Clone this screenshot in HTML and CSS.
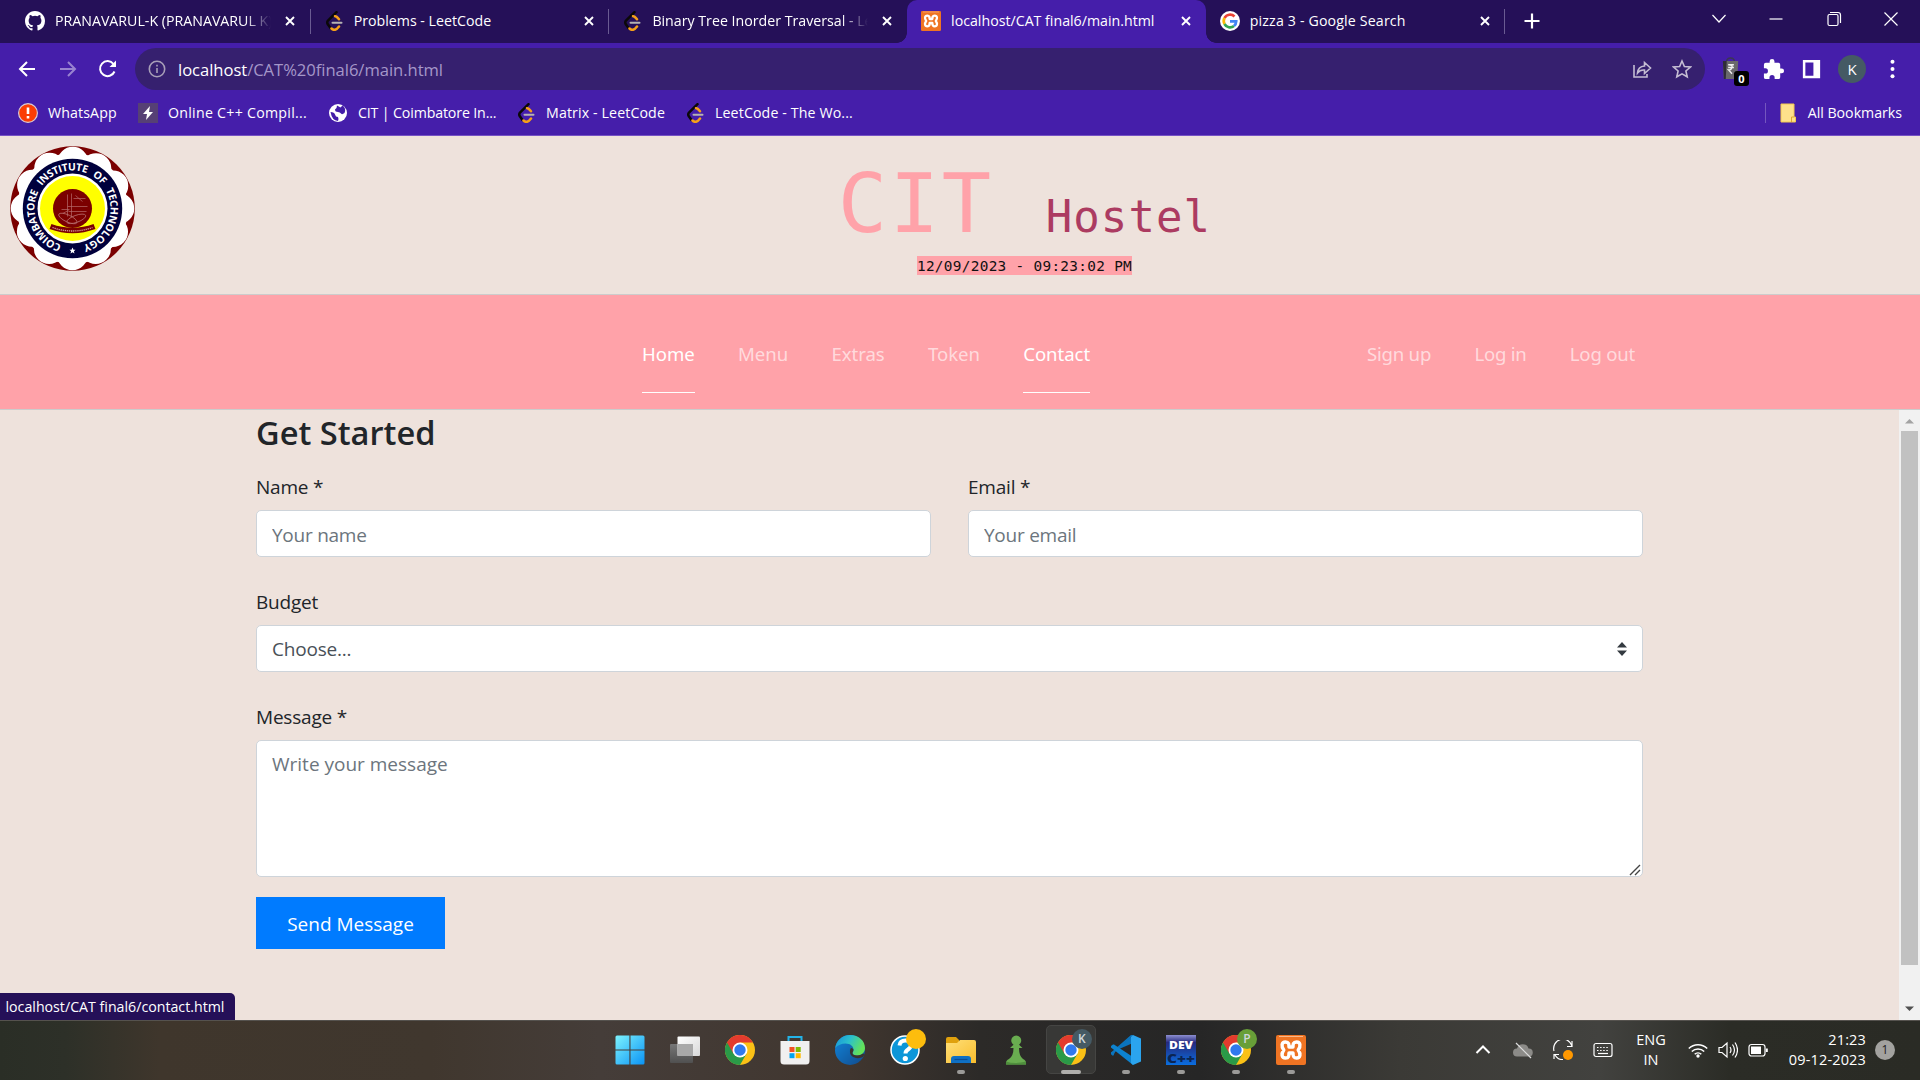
FILE: index.html
```html
<!DOCTYPE html>
<html lang="en">
<head>
<meta charset="utf-8">
<title>CIT Hostel</title>
<link rel="stylesheet" href="styles.css">
</head>
<body>
<svg class="defs" width="0" height="0" aria-hidden="true">
  <defs>
    <linearGradient id="win" x1="0" y1="0" x2="1" y2="1"><stop offset="0" stop-color="#7df3fd"/><stop offset="1" stop-color="#0a93f5"/></linearGradient>
    <linearGradient id="sheet" x1="0" y1="0" x2="1" y2="1"><stop offset="0" stop-color="#fff"/><stop offset="1" stop-color="#d8d8d8"/></linearGradient>
    <linearGradient id="sheetdark" x1="0" y1="0" x2="0" y2="1"><stop offset="0" stop-color="#777"/><stop offset="1" stop-color="#505050"/></linearGradient>
    <linearGradient id="edgeTop" x1="0" y1="0" x2="1" y2="0.4"><stop offset="0" stop-color="#1690dc"/><stop offset=".5" stop-color="#2bc0cc"/><stop offset="1" stop-color="#63e25a"/></linearGradient>
    <linearGradient id="edgeLow" x1="0" y1="0" x2="1" y2="1"><stop offset="0" stop-color="#1186dc"/><stop offset="1" stop-color="#114a8b"/></linearGradient>
    <linearGradient id="fold" x1="0" y1="0" x2="1" y2="1"><stop offset="0" stop-color="#ffdf78"/><stop offset="1" stop-color="#f9bd2d"/></linearGradient>
    <linearGradient id="dev" x1="0" y1="0" x2="0" y2="1"><stop offset="0" stop-color="#8d8fd0"/><stop offset=".25" stop-color="#262a80"/><stop offset=".5" stop-color="#1c3f9c"/><stop offset="1" stop-color="#0a6ee0"/></linearGradient>
    <symbol id="leet" viewBox="-2 0 20 20">
      <path d="M10.500 1.200 2 9.500q-1.500 1.800 0 4L4.500 17" fill="none" stroke="#0b0808" stroke-width="2.500" stroke-linecap="round"/>
      <path d="M9 5.200q1.500-.2 4 3M5.500 17.500q3.500 3.500 7.500-2" fill="none" stroke="#f6a019" stroke-width="2.500" stroke-linecap="round"/>
      <path d="M6.500 11.700h9" stroke="#b6b3b3" stroke-width="2" stroke-linecap="round"/>
    </symbol>
    <symbol id="close" viewBox="0 0 12 12"><path d="m2 2 8 8m0-8-8 8" stroke="#fff" stroke-width="1.900"/></symbol>
    <symbol id="chrome" viewBox="0 0 30 30">
      <circle cx="15" cy="15" r="15" fill="#fbc116"/>
      <path d="M15 15 2 7.500A15 15 0 0 0 15 30l6.500-11.200Z" fill="#2a9a48"/>
      <path d="M2 7.500A15 15 0 0 1 28 7.500H15L8.500 18.800Z" fill="#e33b2e"/>
      <circle cx="15" cy="15" r="7.500" fill="#fff"/><circle cx="15" cy="15" r="5.700" fill="#3079ee"/>
    </symbol>
    <symbol id="xampp" viewBox="0 0 30 30">
      <rect width="30" height="30" rx="2" fill="#ef7423"/><path d="M3 1.500h24" stroke="#f9b788" stroke-width="1"/>
      <path d="M9.500 7C5.500 7 5 11 7.800 15 5 19 5.500 23 9.500 23c3.500 0 3.500-2.500 3.500-5h4c0 2.500 0 5 3.500 5 4 0 4.500-4 1.700-8 2.800-4 2.300-8-1.700-8-3.500 0-3.500 2.500-3.500 5h-4c0-2.500 0-5-3.500-5Z" fill="none" stroke="#fff" stroke-width="3.400" stroke-linejoin="round"/>
    </symbol>
  </defs>
</svg>

<header class="tabs">
  <div class="tab">
    <svg class="fav" viewBox="0 0 16 16"><path fill="#fff" d="M8 0C3.580 0 0 3.580 0 8c0 3.540 2.290 6.530 5.470 7.590.4.070.55-.17.55-.38 0-.19-.01-.82-.01-1.490-2.010.37-2.530-.49-2.690-.94-.09-.23-.48-.94-.82-1.130-.28-.15-.68-.52-.01-.53.63-.01 1.080.58 1.230.82.72 1.210 1.870.87 2.330.66.070-.52.28-.87.51-1.070-1.780-.2-3.640-.89-3.640-3.950 0-.87.31-1.590.82-2.150-.08-.2-.36-1.020.08-2.120 0 0 .67-.21 2.200.82a7.600 7.600 0 0 1 4 0c1.530-1.040 2.200-.82 2.200-.82.44 1.100.16 1.920.08 2.120.51.56.82 1.270.82 2.150 0 3.070-1.870 3.750-3.650 3.950.29.25.54.73.54 1.480 0 1.070-.01 1.930-.01 2.200 0 .21.15.46.55.38A8 8 0 0 0 16 8c0-4.420-3.580-8-8-8Z"/></svg>
    <span class="name fade">PRANAVARUL-K (PRANAVARUL K)</span><svg class="x"><use href="#close"/></svg>
  </div>
  <div class="tab line"><svg class="fav"><use href="#leet"/></svg><span class="name">Problems - LeetCode</span><svg class="x"><use href="#close"/></svg></div>
  <div class="tab line"><svg class="fav"><use href="#leet"/></svg><span class="name fade">Binary Tree Inorder Traversal - LeetCode</span><svg class="x"><use href="#close"/></svg></div>
  <div class="tab active"><svg class="fav"><use href="#xampp"/></svg><span class="name">localhost/CAT final6/main.html</span><svg class="x"><use href="#close"/></svg></div>
  <div class="tab">
    <svg class="fav" viewBox="0 0 20 20"><circle cx="10" cy="10" r="10" fill="#fff"/><g fill="none" stroke-width="2.700"><path d="M14.500 5.500A6.300 6.300 0 0 0 4.500 7" stroke="#ea4335"/><path d="M4.500 7a6.300 6.300 0 0 0 0 6" stroke="#fbbc05"/><path d="M4.500 13a6.300 6.300 0 0 0 9.500 2" stroke="#34a853"/><path d="M14 15a6.300 6.300 0 0 0 2.200-4.600H10" stroke="#4285f4"/></g></svg>
    <span class="name wide">pizza 3 - Google Search</span><svg class="x"><use href="#close"/></svg>
  </div>
  <div class="newtab"><svg width="18" height="18" viewBox="0 0 18 18"><path d="M9 1.500v15M1.500 9h15" stroke="#fff" stroke-width="2.200"/></svg></div>
  <div class="winctl">
    <svg viewBox="0 0 20 20"><path d="m3.500 6 6.500 7 6.500-7"/></svg>
    <svg viewBox="0 0 20 20"><path d="M3.500 10h13"/></svg>
    <svg viewBox="0 0 20 20"><rect x="4" y="5.500" width="10" height="11" rx="1.500"/><path d="M6 3.500h8q2.500 0 2.500 2.500v8"/></svg>
    <svg viewBox="0 0 20 20"><path d="m3.500 3.500 13 13m0-13-13 13"/></svg>
  </div>
</header>

<div class="toolbar">
  <div class="navbtns">
    <svg viewBox="0 0 20 20"><path d="M18 10H3m7-7-7 7 7 7"/></svg>
    <svg class="dim" viewBox="0 0 20 20"><path d="M2 10h15m-7-7 7 7-7 7"/></svg>
    <svg viewBox="0 0 20 20"><path d="M16.500 12.500A7.500 7.500 0 1 1 15.500 5"/><path d="M18 1.500V8h-6.500Z" fill="#fff" stroke="none"/></svg>
  </div>
  <div class="omnibox">
    <svg class="info" viewBox="0 0 18 18"><circle cx="9" cy="9" r="7.700"/><path d="M9 8v5M9 4.800v1.600"/></svg>
    <span class="url"><b>localhost</b>/CAT%20final6/main.html</span>
    <svg class="act" viewBox="0 0 20 20"><path d="M2 6v12h13v-3"/><path d="M5.500 14q.5-6.500 7-7V3.500l6 5.500-6 5.500V11q-4.500-.5-7 3Z"/></svg>
    <svg class="act" viewBox="0 0 20 20"><path d="m10 2 2.400 5.500 6 .5-4.500 4 1.300 5.800L10 14.800l-5.200 3L6.100 12 1.600 8l6-.5Z"/></svg>
  </div>
  <div class="exts">
    <div class="bag"><svg viewBox="0 0 24 26"><path d="M7 5q0-4 4-4t4 4" fill="none" stroke="#3c3753" stroke-width="1.500"/><path d="M3 4h16l-1 19H4Z" fill="#6a696c"/><path d="M3 4h4l-1 19H4Z" fill="#2f2c38"/><path d="M8.500 8h6M8.500 11h6M9 8q4.500 0 3.500 3t-3.500 2.500l3.500 4" fill="none" stroke="#eee" stroke-width="1.500"/></svg><span class="count">0</span></div>
    <svg viewBox="0 0 24 24"><path fill="#fff" d="M20.500 11H19V7a2 2 0 0 0-2-2h-4V3.500a2.500 2.500 0 0 0-5 0V5H4a2 2 0 0 0-2 2v3.800h1.500a2.700 2.700 0 0 1 0 5.400H2V20a2 2 0 0 0 2 2h3.800v-1.500a2.700 2.700 0 0 1 5.400 0V22H17a2 2 0 0 0 2-2v-4h1.500a2.500 2.500 0 0 0 0-5Z"/></svg>
    <svg viewBox="0 0 24 24"><path fill="#fff" d="M3 2h18v19H3Zm2.600 2.600v13.800h8.400V4.600Z"/></svg>
    <div class="profile">K</div>
    <svg viewBox="0 0 24 24"><g fill="#fff"><circle cx="12" cy="4" r="2.100"/><circle cx="12" cy="11.500" r="2.100"/><circle cx="12" cy="19" r="2.100"/></g></svg>
  </div>
</div>

<nav class="bookmarks">
  <a class="bm b1"><svg viewBox="0 0 20 20"><circle cx="10" cy="10" r="9.400" fill="#fb3d04" stroke="#d8ccd8" stroke-width="1.200"/><path d="M10 4.500v6.500M10 13v2.600" stroke="#fff" stroke-width="2.600"/></svg>WhatsApp</a>
  <a class="bm b2"><svg viewBox="0 0 20 20"><path fill="#564075" d="M0 0h20v20H0z"/><path fill="#fff" d="M12 3 5 11h4l-1 6 7-8h-4Z"/></svg>Online C++ Compil...</a>
  <a class="bm b3"><svg viewBox="0 0 20 20"><circle cx="10" cy="10" r="9" fill="#fff"/><path d="M2.500 9q4 0 4.500 2.500t3 2.500q1 2 0 4-6-.5-7.500-9ZM9 2.500q0 3-2 4 0 2.500 3 2.500 2 0 3 1.500t3.500-.5q2-5-2-7.500l-2 2Z" fill="#431ca8"/></svg>CIT | Coimbatore In...</a>
  <a class="bm b4"><svg><use href="#leet"/></svg>Matrix - LeetCode</a>
  <a class="bm b5"><svg><use href="#leet"/></svg>LeetCode - The Wo...</a>
  <a class="bm all"><svg viewBox="0 0 20 20"><path fill="#fee08b" stroke="#f3c84e" d="M3 1h13v13h1.500v5H3Z"/><path d="M13.500 19v-5H16" fill="none" stroke="#dda92e"/></svg>All Bookmarks</a>
</nav>

<section class="masthead">
  <svg class="seal" viewBox="-62.5 -62.5 125 125">
    <circle r="62.300" fill="#7b0000"/>
    <circle r="55.500" fill="#fff"/>
    <circle r="46.500" fill="none" stroke="#fff" stroke-width="30.500" stroke-dasharray="0 24.347" stroke-linecap="round"/>
    <circle r="49.700" fill="#00003c"/><circle r="35" fill="#fff"/><circle r="32.500" fill="#ff0"/>
    <circle r="19.500" fill="#7b0000"/>
    <path d="M-5-14V8m4-23V9M1-10h12M3-13l7 6M-5-2h20M-4 3h18M-11 1h8M-10 5l6-3" stroke="#b66a6a" stroke-width=".7" fill="none"/>
    <ellipse cy="11" rx="10" ry="3.500" fill="none" stroke="#b66a6a" stroke-width=".8" transform="rotate(25)"/>
    <ellipse cy="11" rx="10" ry="3.500" fill="none" stroke="#b66a6a" stroke-width=".8" transform="rotate(-20)"/>
    <path d="M-22 18Q0 26 22 18" fill="none" stroke="#7b0000" stroke-width="5.500"/><path d="M-20 19Q0 26 20 19" fill="none" stroke="#d59a9a" stroke-width="1.300" stroke-dasharray="1.300 .8"/>
    <path id="ring" d="M0 38A38 38 0 0 1 0-38 38 38 0 0 1 0 38" fill="none"/>
    <text class="ringtext"><textPath href="#ring" startOffset="11" textLength="217">COIMBATORE INSTITUTE OF TECHNOLOGY</textPath></text>
    <path d="m0 39 1 2.200h2l-1.600 1.500.6 2.300-2-1.300-2 1.300.6-2.300L-3 41.200h2Z" fill="#fff"/>
  </svg>
  <div class="brand">
    <h1><span class="cit">CIT </span><span class="hostel">Hostel</span></h1>
    <span class="clock">12/09/2023 - 09:23:02 PM</span>
  </div>
</section>

<nav class="menu">
  <div class="links main"><a class="on">Home</a><a>Menu</a><a>Extras</a><a>Token</a><a class="on">Contact</a></div>
  <div class="links user"><a>Sign up</a><a>Log in</a><a>Log out</a></div>
</nav>

<main class="page">
  <form class="form">
    <h2>Get Started</h2>
    <div class="row">
      <label class="field"><span>Name *</span><input placeholder="Your name"></label>
      <label class="field"><span>Email *</span><input placeholder="Your email"></label>
    </div>
    <label class="field"><span>Budget</span><div class="select">Choose...<svg viewBox="0 0 10 14"><path d="M5 0 10 5.500H0ZM0 8.500h10L5 14Z" fill="#343a40"/></svg></div></label>
    <label class="field message"><span>Message *</span><textarea placeholder="Write your message"></textarea><svg class="grip" viewBox="0 0 12 12"><path d="M1 11 11 1M6 11l5-5" stroke="#444" stroke-width="1.400"/></svg></label>
    <button type="button">Send Message</button>
  </form>
  <div class="scroll"><svg viewBox="0 0 21 21"><path d="M6 13.500h9L10.500 9Z" fill="#a3a3a3"/></svg><div class="thumb"></div><svg viewBox="0 0 21 21"><path d="M6 7.500h9L10.500 12Z" fill="#505050"/></svg></div>
  <div class="status">localhost/CAT final6/contact.html</div>
</main>

<footer class="taskbar">
  <div class="apps">
    <div class="app"><svg viewBox="0 0 30 30"><path fill="url(#win)" d="M.5 2q0-1.500 1.500-1.500h12.400v14H.5Zm15 -1.500H28q1.500 0 1.500 1.500v12.500h-14Zm-15 15h13.900v14H2q-1.500 0-1.500-1.500Zm15 0h14V28q0 1.500-1.500 1.500H15.500Z"/></svg></div>
    <div class="app"><svg viewBox="0 0 30 30"><rect y="9" width="23" height="19" rx="1" fill="url(#sheetdark)"/><rect x="7.500" y="1.500" width="22.500" height="19.500" rx="1" fill="url(#sheet)"/><path fill="#a9a9a9" d="M7.500 9H23v12H7.500z"/></svg></div>
    <div class="app"><svg><use href="#chrome"/></svg></div>
    <div class="app"><svg viewBox="0 0 30 30"><path d="M8.500 7V2h13v5" fill="none" stroke="#23b3e8" stroke-width="2"/><path d="M.5 6h29v20q0 3.500-3.500 3.500H4Q.5 29.500.5 26Z" fill="#f0f0f0"/><path fill="#f25022" d="M9.500 12h5v5h-5z"/><path fill="#7fba00" d="M15.700 12h5v5h-5z"/><path fill="#00a4ef" d="M9.500 18.200h5v5h-5z"/><path fill="#ffb900" d="M15.700 18.200h5v5h-5z"/></svg></div>
    <div class="app"><svg viewBox="0 0 30 30"><circle cx="15" cy="15" r="15" fill="url(#edgeLow)"/><path d="M.3 13C1 6 7 0 15 0c9 0 15 6 15 13 0 5-4 7.500-8 7.500-3 0-4.500-1-4.500-2.500 0-1 1-1.500 1-3.500 0-3-3-6-8-6-4 0-8 1.500-10.200 4.500Z" fill="url(#edgeTop)"/><path d="M18.500 14.500c0 2-1 2.500-1 3.500 0 1.500 1.500 2.500 4.500 2.500 2.500 0 4.500-.7 6-2l1.500 1-1.500 2.500q-3 1.500-7 1-5-1-6-5-.3-3 .5-4.500 1.500-1.500 3 1Z" fill="#3a332e"/></svg></div>
    <div class="app help"><svg viewBox="0 0 30 30"><circle cx="15" cy="15" r="14" fill="#0d96d8" stroke="#fff" stroke-width="1.500"/><path d="M9.500 10.500q.5-5 6-5 5.500 0 5.500 4.500 0 2.500-3 4.500-2.500 1.500-2.500 4" fill="none" stroke="#fff" stroke-width="4"/><circle cx="15.300" cy="23.500" r="2.600" fill="#fff"/></svg><span class="badge gold"></span></div>
    <div class="app run"><svg viewBox="0 0 30 30"><path d="M0 4q0-2 2-2h8l3 3v5H0Z" fill="#e0a10d"/><path d="M0 8h11l3-3h14q2 0 2 2v21H0Z" fill="url(#fold)"/><path d="M5 28v-4q0-3 3-3h14q3 0 3 3v4Z" fill="#0f70c4"/><path d="M8.500 24.500h13" stroke="#0a4d96" stroke-width="1.200"/></svg></div>
    <div class="app"><svg viewBox="0 0 30 30"><path d="M5 29.500q-.5-4 3-5.500 4.500-3 4.500-11H9l3.500-3.200a5 5 0 1 1 5.500 0L21.500 13H18q0 8 4 11 3.500 1.500 3 5.500Z" fill="#69ad50"/><path d="M5 29.500v-3q9 3 20 0v3Z" fill="#4f8f3d"/></svg></div>
    <div class="app run focus"><svg><use href="#chrome"/></svg><span class="badge slate">K</span></div>
    <div class="app run"><svg viewBox="0 0 30 30"><path d="M22 0 5 14.500 2.500 20.500h-1L0 19v-1.500L22 8Z" fill="#0b74bd"/><path d="M22 0 2.500 18.500l-.5 2L0 19v-1.500L20 0Z" fill="#0b74bd"/><path d="M22 30 0 12.500V11l2-1.500h1L22 22Z" fill="#0d83d0"/><path d="m22 0 8 3.500v23L22 30l-2-2V2Z" fill="#2ba4ee"/></svg></div>
    <div class="app run"><svg viewBox="0 0 30 30"><rect width="30" height="30" fill="url(#dev)"/><text x="15" y="13.500" class="devtop" text-anchor="middle" textLength="24" lengthAdjust="spacingAndGlyphs">DEV</text><text x="15" y="27.500" class="devlow" text-anchor="middle" textLength="28" lengthAdjust="spacingAndGlyphs">C++</text></svg></div>
    <div class="app run"><svg><use href="#chrome"/></svg><span class="badge green">P</span></div>
    <div class="app run"><svg><use href="#xampp"/></svg></div>
  </div>
  <div class="tray">
    <svg viewBox="0 0 20 20"><path d="m3.500 13 6.500-6.500 6.500 6.500" stroke-width="2"/></svg>
    <svg viewBox="0 0 20 20"><path d="M4 16.500a4 4 0 0 1 0-8 6 6 0 0 1 11.500 0 4 4 0 0 1 .5 8Z" fill="#8c8b88" stroke="none"/><path d="m3 3 15 15" stroke="#ddd"/></svg>
    <svg viewBox="0 0 20 20"><path d="M1 11A9 9 0 0 1 19 6m0-5v5.500h-5M1 19v-4.500h5M2 15q3 5 8 4.500"/><circle cx="15" cy="15" r="5" fill="#ff9800" stroke="none"/></svg>
    <svg viewBox="0 0 20 20"><rect x="1" y="3.500" width="18" height="13" rx="2"/><path d="M4 7.500h12M4 10.500h12" stroke-dasharray="1.500 1.600"/><path d="M5 13.500h10"/></svg>
    <div class="lang">ENG<br>IN</div>
    <div class="sys">
      <svg viewBox="0 0 20 20"><path d="M.8 8.500a13 13 0 0 1 18.400 0M3.800 11.500a8.700 8.700 0 0 1 12.400 0M6.700 14.300a4.700 4.700 0 0 1 6.600 0" stroke-width="1.500"/><circle cx="10" cy="16" r="1.700" fill="#fff" stroke="none"/></svg>
      <svg viewBox="0 0 20 20"><path d="M1 7.500h3L9 3v14l-5-4.500H1ZM12 7q2 3 0 6M14.500 4.500q4 5.500 0 11M17 2.500q5 7.500 0 15"/></svg>
      <svg viewBox="0 0 20 20"><rect x="1" y="4.500" width="16" height="11.500" rx="2.500"/><path d="M3 6.500h10v7.500H3z" fill="#fff" stroke="none"/><path d="M18.800 8.500v3.500" stroke-width="2"/></svg>
    </div>
    <div class="time">21:23<br>09-12-2023</div>
    <div class="notif">1</div>
  </div>
</footer>
</body>
</html>
```
FILE: styles.css
```css
* { box-sizing: border-box; }
html, body { margin: 0; height: 100%; overflow: hidden; }
body {
  display: flex; flex-direction: column;
  font-family: "Open Sans", "Noto Sans", sans-serif;
  color: #212529; background: #eee2dc;
}
svg { display: block; flex: none; }
.defs { position: absolute; }

/* Browser tab strip */
.tabs { display: flex; height: 43px; flex: none; padding-left: 11px; background: #251058; color: #fff; }
.tab { display: flex; align-items: center; width: 298.700px; height: 43px; padding: 0 0 2px 14px; position: relative; }
.tab .fav { width: 20px; height: 20px; margin-right: 10px; }
.tab .name { width: 216px; font-size: 14.2px; white-space: nowrap; overflow: hidden; margin-right: 13px; }
.tab .wide { letter-spacing: .15px; }
.tab .fade { -webkit-mask-image: linear-gradient(90deg, #000 190px, transparent 216px); mask-image: linear-gradient(90deg, #000 190px, transparent 216px); }
.tab .x { width: 12px; height: 12px; }
.tab.line::before, .newtab::before { content: ""; position: absolute; left: 0; top: 9px; width: 1px; height: 25px; background: #6a5b92; }
.tab.active { background: #451eaa; border-radius: 10px 10px 0 0; }
.tab.active::before, .tab.active::after { content: ""; position: absolute; bottom: 0; width: 10px; height: 10px; }
.tab.active::before { left: -10px; background: radial-gradient(circle at 0 0, transparent 9.5px, #451eaa 10px); }
.tab.active::after { right: -10px; background: radial-gradient(circle at 100% 0, transparent 9.5px, #451eaa 10px); }
.newtab { position: relative; display: flex; align-items: center; padding: 0 0 2px 19px; }
.winctl { display: flex; gap: 37.400px; margin-left: auto; padding: 9px 19px 0 0; }
.winctl svg { width: 20px; height: 20px; fill: none; stroke: #fff; stroke-width: 1.200; }

/* Address bar */
.toolbar { display: flex; flex: none; align-items: center; height: 47px; padding: 5px 16px 0 17px; background: #451eaa; }
.navbtns { display: flex; gap: 20.500px; width: 118px; }
.navbtns svg { width: 20px; height: 20px; fill: none; stroke: #fff; stroke-width: 2; }
.navbtns .dim { opacity: .45; }
.omnibox { display: flex; align-items: center; width: 1570px; height: 42px; padding: 0 13px; border-radius: 21px; background: #36206f; }
.omnibox .info { width: 18px; height: 18px; fill: none; stroke: #a89fb8; stroke-width: 1.600; }
.url { flex: 1; margin-left: 12px; font-size: 16.6px; letter-spacing: -.04px; color: #a597c9; }
.url b { font-weight: 400; color: #fff; }
.act { width: 20px; height: 20px; margin-left: 20px; fill: none; stroke: #c5bdd3; stroke-width: 1.600; }
.exts { display: flex; align-items: center; margin-left: auto; gap: 15px; }
.exts > svg { width: 23px; height: 23px; }
.bag { position: relative; width: 27px; }
.bag svg { width: 23px; height: 25px; }
.count { position: absolute; left: 14px; top: 14px; width: 15px; height: 15px; border-radius: 3px; background: #000; color: #fff; font: 700 11px/15px "Open Sans", sans-serif; text-align: center; }
.profile { width: 28px; height: 28px; border-radius: 50%; background: #455a64; color: #fff; font-size: 15px; line-height: 28px; text-align: center; }

/* Bookmarks */
.bookmarks { display: flex; flex: none; align-items: center; height: 46px; padding: 0 18px; border-bottom: 1px solid #7551c4; background: #451eaa; color: #fff; font-size: 14.2px; white-space: nowrap; }
.bm { display: flex; align-items: center; letter-spacing: .12px; }
.bm svg { width: 20px; height: 20px; margin-right: 10px; }
.b1 { width: 120px; }
.b2 { width: 190px; letter-spacing: .26px; }
.b3 { width: 188px; letter-spacing: -.14px; }
.b4 { width: 169px; }
.all { margin-left: auto; padding-left: 12px; border-left: 1px solid #7456be; letter-spacing: -.02px; }

/* Page header */
.masthead { display: flex; flex: none; height: 158px; padding-left: 10px; background: #eee2dc; }
.seal { width: 125px; height: 125px; margin-top: 10px; }
.ringtext { font: 700 10.4px "Open Sans", sans-serif; word-spacing: 4px; fill: #fff; }
.brand { flex: 1; display: flex; flex-direction: column; align-items: center; padding: 20px 6px 0 0; font-family: "DejaVu Sans Mono", "Liberation Mono", monospace; }
.brand h1 { margin: 0; font-weight: 400; white-space: pre; line-height: 96px; height: 100px; }
.cit { font-size: 82px; letter-spacing: 2.600px; color: #ffa2a9; }
.hostel { font-size: 44px; letter-spacing: 1.100px; color: #ac3b61; }
.clock { height: 19px; background: #ffa2a9; color: #111; font-size: 14.4px; line-height: 20px; letter-spacing: .3px; }

.menu { display: flex; flex: none; height: 116px; padding-left: 642px; border: 1px solid #ccc; border-width: 1px 0; background: #ffa2a9; font-size: 18.6px; letter-spacing: -.05px; font-family: "Noto Sans", "Open Sans", sans-serif; }
.links { display: flex; gap: 43.300px; padding-top: 25px; }
.links a { height: 73px; line-height: 67px; color: rgba(255,255,255,.62); white-space: nowrap; }
.links .on { color: #fff; border-bottom: 1px solid #fff; }
.main { width: 725px; }
.user { letter-spacing: -.23px; }

/* Contact form */
.page { flex: 1; position: relative; display: flex; justify-content: space-between; min-height: 0; }
.form { width: 1387px; margin-left: 256px; font-size: 19px; }
.form h2 { margin: 0 0 16px; font-size: 32.6px; line-height: 45px; height: 44px; font-weight: 600; }
.row { display: flex; gap: 37px; }
.field { display: block; flex: 1; }
.field > span { display: block; height: 40px; line-height: 34px; letter-spacing: -.2px; }
.field input, .select, .field textarea { display: block; width: 100%; height: 47px; padding: 0 15px; border: 1px solid #ced4da; border-radius: 5px; background: #fff; font: inherit; color: #495057; }
.field input { padding-top: 2px; letter-spacing: -.25px; }
.field ::placeholder { color: #6c757d; opacity: 1; }
.row, .form > .field { margin-bottom: 28px; }
.select { display: flex; align-items: center; justify-content: space-between; letter-spacing: -.2px; }
.select svg { width: 10px; height: 14px; }
.message { position: relative; }
.form .field textarea { height: 137px; padding: 10px 15px; outline: 0; resize: none; }
.grip { position: absolute; right: 2px; bottom: 1px; width: 12px; height: 12px; }
.form button { display: block; width: 189px; height: 52px; margin-top: -8px; padding: 2px 0 0; border: 0; background: #007bff; color: #fff; font: inherit; }
.scroll { display: flex; flex-direction: column; width: 21px; background: #f1f1f1; }
.scroll svg { width: 21px; height: 21px; }
.thumb { height: 534px; margin: 0 2px 34px; background: #c1c1c1; }
.status { position: absolute; left: 0; bottom: 0; width: 235px; height: 27px; padding-left: 5.5px; border-radius: 0 5px 0 0; background: #251058; color: #fff; font-size: 14.2px; line-height: 27px; white-space: nowrap; }

/* Taskbar */
.taskbar { display: flex; flex: none; height: 60px; border-top: 1px solid #55524e; color: #fff;
  background: linear-gradient(90deg, #2a2e26 0, #2d3028 65px, #3f362c 160px, #40372e 430px, #453d39 600px, #40362f 850px, #2c2a28 980px, #262626 1200px, #3b3a36 1400px, #42423f 1600px, #2b2c26 1730px, #2a2b25 100%); }
.apps { display: flex; margin-left: 605px; }
.app { position: relative; width: 50px; height: 49px; margin: 4px 5.100px 0 0; padding: 10px; border-radius: 5px; }
.app svg { width: 30px; height: 30px; }
.app.focus { background: #383836; border: 1px solid #454543; padding: 9px; }
.app.run::after { content: ""; position: absolute; left: 21px; bottom: 0; width: 8px; height: 4px; border-radius: 2px; background: #9b9a98; }
.app.focus::after { left: 14px; bottom: -1px; width: 20px; background: #b0afac; }
.badge { position: absolute; right: 4px; top: 4px; width: 20px; height: 20px; border-radius: 50%; font: 600 12px/20px "Open Sans", sans-serif; text-align: center; color: #cfd8dc; }
.focus .badge { right: 3px; top: 3px; }
.gold { background: #fdbd0d; }
.slate { background: #455a64; }
.green { background: #689f38; }
.devtop { font: 800 11px "Open Sans", sans-serif; fill: #fff; }
.devlow { font: 800 13px "Open Sans", sans-serif; fill: #0b2552; }
.tray { display: flex; align-items: center; margin-left: auto; padding: 0 25px 2px 0; }
.tray svg { width: 20px; height: 20px; fill: none; stroke: #fff; stroke-width: 1.200; margin-right: 20px; }
.lang, .time { font-size: 14.500px; line-height: 20px; }
.lang { width: 36px; text-align: center; }
.sys { display: flex; gap: 10px; margin-left: 19px; }
.tray .sys svg { margin: 0; }
.time { width: 98px; text-align: right; letter-spacing: .15px; }
.notif { width: 20px; height: 20px; margin-left: 9px; border-radius: 50%; background: #a3a29f; color: #222; font-size: 12px; line-height: 20px; text-align: center; }
```
